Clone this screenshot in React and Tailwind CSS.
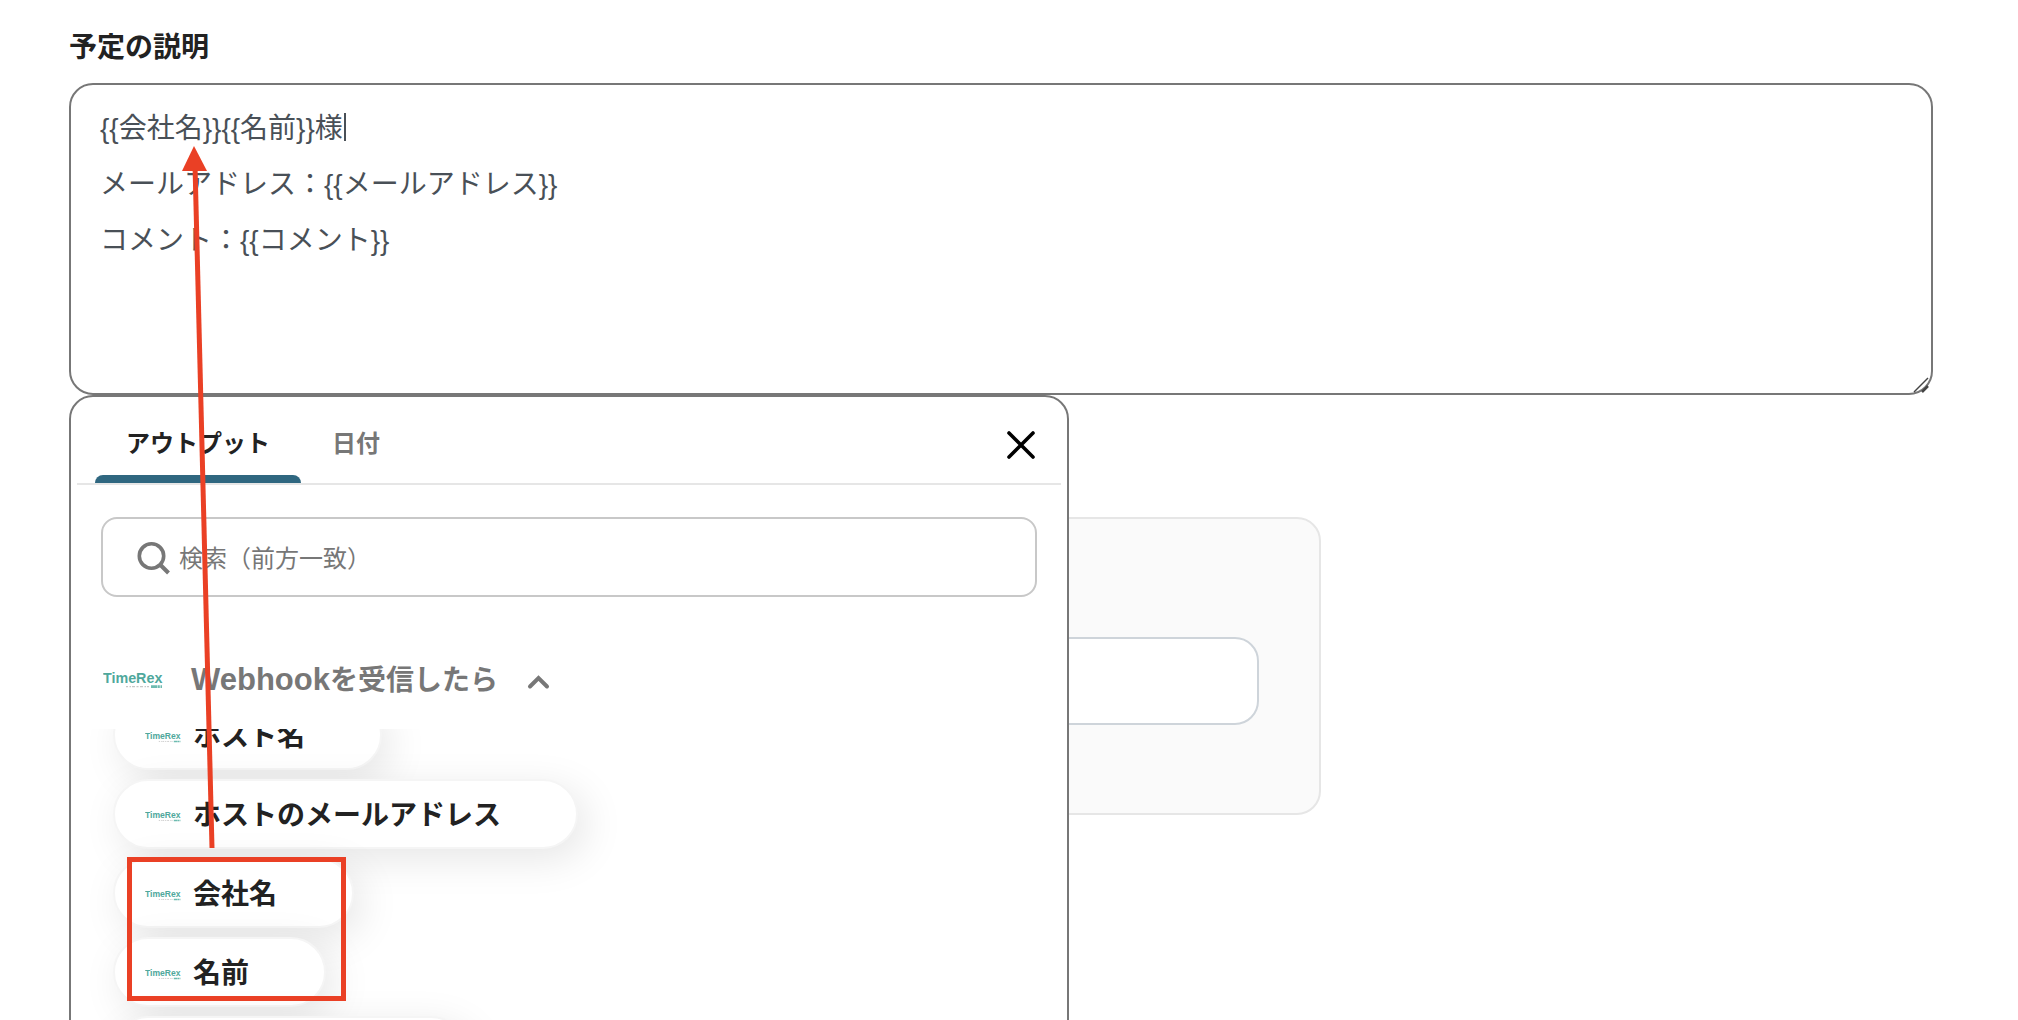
import { useState } from 'react';

const defaultDescription = [
  '{{会社名}}{{名前}}様',
  'メールアドレス：{{メールアドレス}}',
  'コメント：{{コメント}}',
].join('\n');

const tabs = ['アウトプット', '日付'];

const outputs = ['ホスト名', 'ホストのメールアドレス', '会社名', '名前', 'メールアドレス'];

function TimeRexLogo({ className }) {
  return (
    <svg viewBox="0 0 60 18" className={className} role="img" aria-label="TimeRex">
      <text x="0" y="12" fontSize="14.300" fontWeight="700" fill="#4fa89c" fontFamily="Liberation Sans, Arial, sans-serif">
        TimeRex
      </text>
      <path d="M23 15.6h2M26.500 15.600h1.500M29 15.600h3M33.500 15.600h2M37 15.600h3M41.500 15.600h1.500M44 15.600h2" stroke="#c8c8c8" strokeWidth="1.400" />
      <path d="M48 15.600h6.500M55 15.600h1.800M57.500 15.600h1.500" stroke="#6dbbb0" strokeWidth="2.600" />
    </svg>
  );
}

function OutputChip({ name }) {
  return (
    <button
      type="button"
      className="flex h-[70px] items-center gap-3 rounded-full border-2 border-[#f5f5f5] bg-white pt-1 pr-[75px] pl-[30px] text-[28px] leading-10 font-bold text-[#222222] shadow-[8px_10px_40px_rgba(0,0,0,0.1)]"
    >
      <TimeRexLogo className="h-[11px] w-9" />
      {name}
    </button>
  );
}

function OutputPanel() {
  const [activeTab, setActiveTab] = useState(tabs[0]);
  const [open, setOpen] = useState(true);

  return (
    <div className="absolute top-full left-0 z-10 w-[1000px] max-w-full rounded-3xl border-2 border-[#777777] bg-white pb-8">
      {/* Tabs */}
      <div className="mx-1.5 flex h-[88px] items-stretch justify-between border-b-2 border-[#e6e6e6] pr-6 pl-[18px]">
        <div className="flex" role="tablist">
          {tabs.map((tab) => (
            <button
              key={tab}
              type="button"
              role="tab"
              aria-selected={activeTab === tab}
              onClick={() => setActiveTab(tab)}
              className={`relative px-[31px] pt-2 text-2xl font-bold ${
                activeTab === tab ? 'text-[#222222]' : 'text-[#777777]'
              }`}
            >
              {tab}
              {activeTab === tab && (
                <span className="absolute inset-x-0 bottom-0 h-2 rounded-t-lg bg-[#2f6780]" />
              )}
            </button>
          ))}
        </div>
        <button type="button" aria-label="閉じる" className="pt-2.5">
          <svg viewBox="0 0 32 32" className="size-8" fill="none" stroke="#000" strokeWidth="3.6" strokeLinecap="round">
            <path d="M4 4L28 28M28 4L4 28" />
          </svg>
        </button>
      </div>

      {/* Search */}
      <div className="px-[30px] pt-8">
        <label className="flex h-20 items-center gap-2 rounded-2xl border-2 border-[#c8c8c8] pt-1 pl-[34px]">
          <svg viewBox="0 0 34 34" className="size-[34px] shrink-0" fill="none" stroke="#777777" strokeWidth="3.6">
            <circle cx="14.500" cy="14" r="12.200" />
            <path d="M23 22.500L31.500 31" strokeWidth="4" />
          </svg>
          <input
            type="text"
            aria-label="検索"
            placeholder="検索（前方一致）"
            className="min-w-0 flex-1 bg-transparent text-2xl text-[#222222] outline-none placeholder:text-[#777777]"
          />
        </label>
      </div>

      {/* Trigger step */}
      <button
        type="button"
        aria-expanded={open}
        onClick={() => setOpen(!open)}
        className="mt-[63px] flex h-10 items-center pl-8 text-[28px] leading-10 font-bold text-[#777777]"
      >
        <TimeRexLogo className="mr-7 h-[18px] w-[60px]" />
        <span><span className="text-[31px]">Webhook</span>を受信したら</span>
        <svg viewBox="0 0 24 16" className="mt-1 ml-7 h-4 w-6" fill="none" stroke="#777777" strokeWidth="4" strokeLinecap="round">
          <path d="M4 12.500L12.500 4L21 12.500" />
        </svg>
      </button>

      {/* Scrolled list of outputs */}
      {open && (
        <div className="mx-4 mt-[29px] overflow-hidden pb-16 pl-[26px]">
          <div className="-mt-[29px] flex flex-col items-start gap-[9px]">
            {outputs.map((name) => (
              <OutputChip key={name} name={name} />
            ))}
          </div>
        </div>
      )}
    </div>
  );
}

// Red arrow and frame drawn over the form
function Annotation() {
  return (
    <svg width="400" height="1020" className="pointer-events-none absolute top-0 left-0 z-20" fill="none" aria-hidden="true">
      <path d="M212 848L195 165" stroke="#ea4025" strokeWidth="5" />
      <path d="M194 146L207 171H182Z" fill="#ea4025" />
      <rect x="129.500" y="859.500" width="214" height="139" stroke="#ea4025" strokeWidth="5" />
    </svg>
  );
}

export default function App() {
  const [description, setDescription] = useState(defaultDescription);

  return (
    <div className="relative h-screen overflow-hidden bg-white pt-7 pr-[85px] pl-[69px] font-['Liberation_Sans','Noto_Sans_CJK_JP',sans-serif]">
      <label htmlFor="description" className="block text-[28px] leading-10 font-bold text-[#222222]">
        予定の説明
      </label>

      <div className="relative mt-[15px]">
        <textarea
          id="description"
          value={description}
          onChange={(e) => setDescription(e.target.value)}
          className="block h-[312px] w-full resize-none rounded-3xl border-2 border-[#777777] bg-white px-[29px] py-4 text-[28px] leading-[56px] text-[#495057] outline-none"
        />
        <span className="absolute top-[30px] left-[275px] h-7 w-0.5 bg-[#495057]" />
        <svg viewBox="0 0 16 16" className="absolute right-1 bottom-0.5 size-4" fill="none" stroke="#444444" strokeWidth="1.5" aria-hidden="true">
          <path d="M1 15L15 1" />
          <path d="M9 15L15 9" strokeWidth="2.5" />
        </svg>
        <OutputPanel />
      </div>

      <div className="mt-[122px] w-[1252px] max-w-full rounded-3xl border-2 border-[#e6e6e6] bg-[#fafafa] px-[60px] pt-[118px] pb-[88px]">
        <input
          type="text"
          aria-label="場所"
          className="block h-[88px] w-full rounded-3xl border-2 border-[#ced4da] bg-white px-7 text-[28px] outline-none"
        />
      </div>

      <Annotation />
    </div>
  );
}
